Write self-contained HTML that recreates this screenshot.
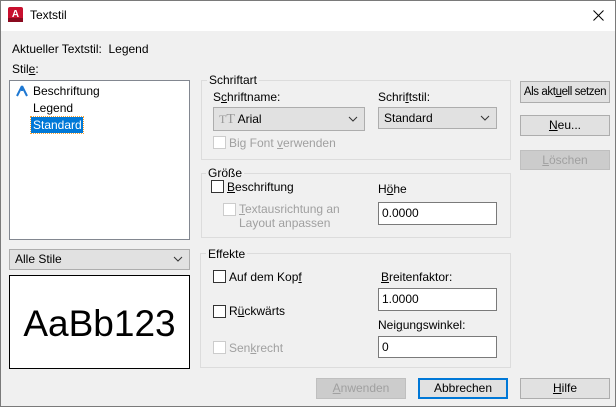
<!DOCTYPE html>
<html><head><style>
*{box-sizing:border-box;margin:0;padding:0}
body{width:616px;height:407px;background:#f0f0f0;font-family:"Liberation Sans",Arial,sans-serif;font-size:12px;color:#000;position:relative;overflow:hidden}
.a{position:absolute;white-space:nowrap}
.win{position:absolute;left:0;top:0;width:616px;height:407px;border:1px solid #7a7a7a}
.title{position:absolute;left:1px;top:1px;width:614px;height:30px;background:#fff}
.grp{position:absolute;border:1px solid #dcdcdc}
.lbl{position:absolute;background:#f0f0f0;padding:0 2px}
.btn{position:absolute;border:1px solid #adadad;background:#e1e1e1;text-align:center;line-height:18px;white-space:nowrap;overflow:hidden}
.dis{color:#a0a0a0;background:#cccccc;border-color:#bfbfbf}
.cb{position:absolute;width:13px;height:13px;border:1px solid #333;background:#fff}
.cbd{border-color:#cccccc}
.inp{position:absolute;border:1px solid #7a7a7a;background:#fff;padding-left:3px;line-height:20px}
.combo{position:absolute;border:1px solid #adadad;background:#e1e1e1;padding-left:5px}
.chev{position:absolute;right:6px;top:4px}
u{text-decoration:underline}
</style></head><body>
<div class="win"></div>
<div class="title"></div>
<svg class="a" style="left:8px;top:7px" width="15" height="15"><rect width="15" height="15" rx="2" fill="#c8102e"/><rect y="11" width="15" height="4" fill="#8a0a1f"/><text x="7.5" y="10" font-size="10" font-weight="bold" fill="#fff" text-anchor="middle" font-family="Liberation Sans">A</text></svg>
<div class="a" style="left:30px;top:8px;font-size:12px">Textstil</div>
<svg class="a" style="left:593px;top:10px" width="11" height="11"><path d="M0.5 0.5L10.5 10.5M10.5 0.5L0.5 10.5" stroke="#000" stroke-width="1"/></svg>

<div class="a" style="left:12px;top:42px">Aktueller Textstil:&nbsp; Legend</div>
<div class="a" style="left:12px;top:62px">Stil<u>e</u>:</div>
<div class="a" style="left:9px;top:80px;width:181px;height:160px;background:#fff;border:1px solid #828790"></div>
<svg class="a" style="left:16px;top:85px" width="12" height="12"><path d="M6 1L1 11M6 1L11 11M6 1V6" stroke="#1e78d2" stroke-width="2" fill="none"/></svg>
<div class="a" style="left:33px;top:84px">Beschriftung</div>
<div class="a" style="left:33px;top:101px">Legend</div>
<div class="a" style="left:31px;top:117px;width:52px;height:16px;background:#0078d7;color:#fff;padding-left:2px;line-height:16px;outline:1px dotted #f7a030">Standard</div>

<div class="combo" style="left:9px;top:249px;width:181px;height:21px;line-height:19px">Alle Stile<svg class="chev" width="10" height="10"><path d="M1 3L5 7L9 3" stroke="#333" fill="none"/></svg></div>
<div class="a" style="left:9px;top:275px;width:181px;height:94px;background:#fff;border:1px solid #000"></div>
<div class="a" style="left:9px;top:299px;width:181px;text-align:center;font-size:37px;line-height:50px">AaBb123</div>

<div class="grp" style="left:201px;top:80px;width:310px;height:80px"></div>
<div class="lbl" style="left:207px;top:73px">Schriftart</div>
<div class="a" style="left:213px;top:90px">S<u>c</u>hriftname:</div>
<div class="combo" style="left:213px;top:107px;width:152px;height:24px;line-height:22px;color:#000"><span style="color:#999;font-family:'Liberation Serif';font-size:12px">T<span style="font-size:14px">T</span></span> Arial<svg class="chev" style="top:6px" width="10" height="10"><path d="M1 3L5 7L9 3" stroke="#333" fill="none"/></svg></div>
<div class="a" style="left:378px;top:90px">Schri<u>f</u>tstil:</div>
<div class="combo" style="left:378px;top:107px;width:119px;height:22px;line-height:20px">Standard<svg class="chev" style="top:5px" width="10" height="10"><path d="M1 3L5 7L9 3" stroke="#333" fill="none"/></svg></div>
<div class="cb cbd" style="left:213px;top:136px"></div>
<div class="a" style="left:229px;top:136px;color:#a0a0a0">Big Font <u>v</u>erwenden</div>

<div class="grp" style="left:201px;top:173px;width:310px;height:65px"></div>
<div class="lbl" style="left:206px;top:166px">Größe</div>
<div class="cb" style="left:211px;top:180px"></div>
<div class="a" style="left:227px;top:180px"><u>B</u>eschriftung</div>
<div class="cb cbd" style="left:223px;top:203px"></div>
<div class="a" style="left:239px;top:202px;color:#a0a0a0;line-height:14px"><u>T</u>extausrichtung an<br>Layout anpassen</div>
<div class="a" style="left:378px;top:182px">H<u>ö</u>he</div>
<div class="inp" style="left:378px;top:202px;width:119px;height:23px">0.0000</div>

<div class="grp" style="left:200px;top:253px;width:311px;height:115px"></div>
<div class="lbl" style="left:206px;top:247px">Effekte</div>
<div class="cb" style="left:213px;top:270px"></div>
<div class="a" style="left:229px;top:270px">Auf dem Kop<u>f</u></div>
<div class="cb" style="left:213px;top:305px"></div>
<div class="a" style="left:229px;top:304px">R<u>ü</u>ckwärts</div>
<div class="cb cbd" style="left:213px;top:341px"></div>
<div class="a" style="left:229px;top:341px;color:#a0a0a0">Sen<u>k</u>recht</div>
<div class="a" style="left:381px;top:270px"><u>B</u>reitenfaktor:</div>
<div class="inp" style="left:378px;top:288px;width:119px;height:23px">1.0000</div>
<div class="a" style="left:378px;top:318px">Nei<u>g</u>ungswinkel:</div>
<div class="inp" style="left:378px;top:336px;width:119px;height:22px">0</div>

<div class="btn" style="left:520px;top:81px;width:90px;height:22px;line-height:20px;letter-spacing:-0.4px;font-size:11.5px">Als akt<u>u</u>ell setzen</div>
<div class="btn" style="left:520px;top:115px;width:90px;height:21px"><u>N</u>eu...</div>
<div class="btn dis" style="left:520px;top:150px;width:90px;height:20px"><u>L</u>öschen</div>

<div class="btn dis" style="left:316px;top:378px;width:90px;height:21px"><u>A</u>nwenden</div>
<div class="btn" style="left:418px;top:378px;width:90px;height:21px;border:2px solid #0078d7;line-height:17px">Abbrechen</div>
<div class="btn" style="left:520px;top:378px;width:90px;height:21px"><u>H</u>ilfe</div>
</body></html>
